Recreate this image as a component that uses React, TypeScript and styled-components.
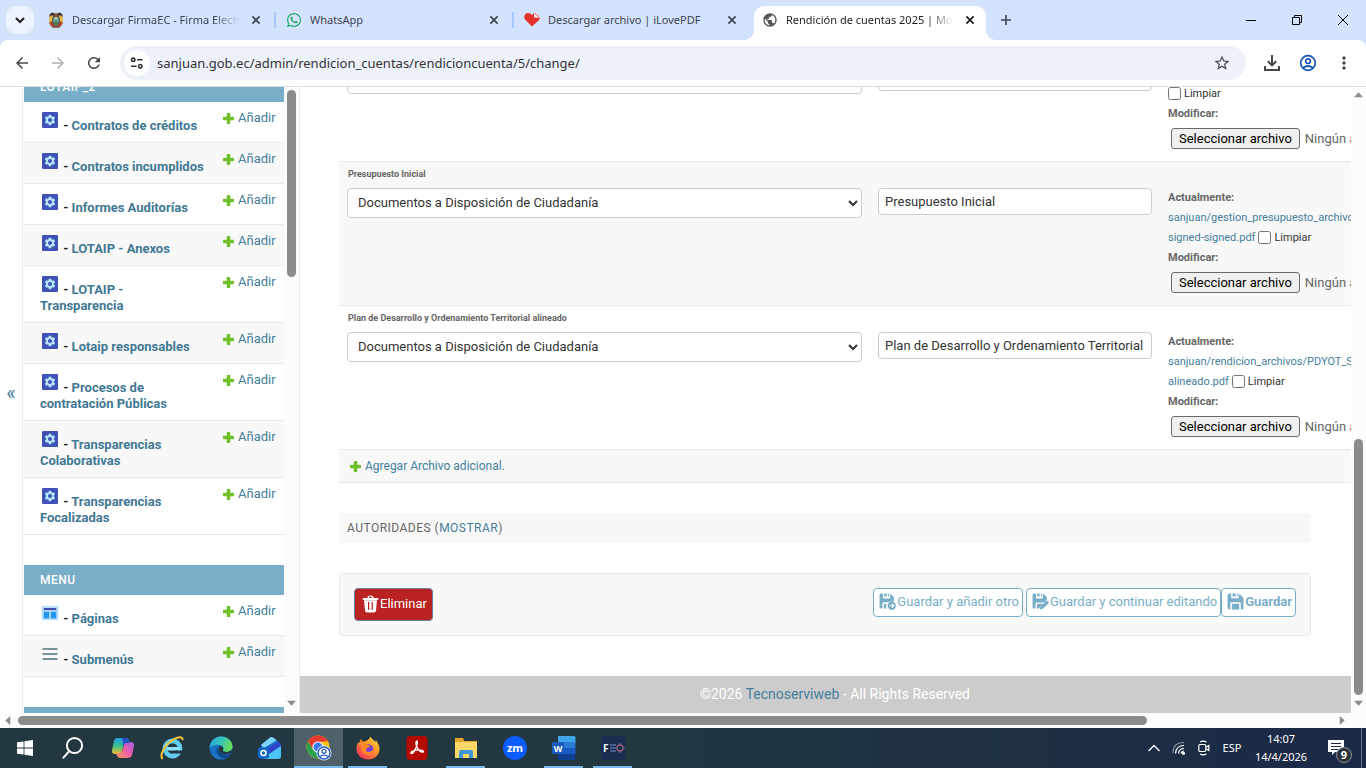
import React from "react";
import styled, { createGlobalStyle, css } from "styled-components";
import { FcTemplate, FcMenu } from "react-icons/fc";
import { FaWhatsapp } from "react-icons/fa";
import { MdArrowBack, MdArrowForward, MdRefresh, MdStarBorder, MdMoreVert, MdPublic } from "react-icons/md";

const uiFont = `"Noto Sans", "Open Sans", sans-serif`;
const pageFont = `Roboto, "Liberation Sans", sans-serif`;

const color = {
  strip: "#d3e3fd",
  omnibox: "#edf1fa",
  link: "#447e9b",
  heading: "#417893",
  accent: "#79aec8",
  hairline: "#e8e8e8",
  darkened: "#f8f8f8",
  border: "#cccccc",
  quiet: "#666666",
  text: "#333333",
  thumb: "#8b8b8b",
  track: "#fcfcfc",
  task: "#76b9ed",
};

const GlobalStyle = createGlobalStyle`
  *, *::before, *::after { box-sizing: border-box; }
  body { margin: 0; overflow: hidden; }
  button { font: inherit; color: inherit; margin: 0; padding: 0; border: 0; background: none; }
  a { color: ${color.link}; text-decoration: none; }
  ul { list-style: none; margin: 0; padding: 0; }
  svg { flex: none; }
`;

const Screen = styled.div`
  display: flex;
  flex-direction: column;
  height: 100vh;
  background: #fff;
  font-family: ${pageFont};
`;

/* ---------- tab strip ---------- */

const TabStrip = styled.header`
  display: flex;
  flex: none;
  height: 40px;
  background: ${color.strip};
  font: 11px/16px ${uiFont};
  color: #3c4350;
`;

const TabSearch = styled.button`
  display: grid;
  place-items: center;
  flex: none;
  width: 28px;
  height: 28px;
  margin: 6px 4px 6px 6px;
  border-radius: 10px;
  background: #ecf2fe;
`;

const Tabs = styled.ul`
  display: flex;
  min-width: 0;
`;

const Tab = styled.li<{ $active?: boolean; $divider?: boolean }>`
  position: relative;
  display: flex;
  align-items: center;
  gap: 8px;
  flex: 0 1 238px;
  min-width: 0;
  width: 238px;
  padding: 0 12px 0 10px;
  ${(p) =>
    p.$divider &&
    css`
      &::after {
        content: "";
        position: absolute;
        right: 0;
        top: 12px;
        width: 2px;
        height: 16px;
        background: #a8c7fa;
      }
    `}
  ${(p) =>
    p.$active &&
    css`
      flex-basis: 232px;
      margin: 6px 4px 0 2px;
      padding: 0 8px 6px;
      border-radius: 10px 10px 0 0;
      background: #fff;
      color: #1f1f1f;
      &::before,
      &::after {
        content: "";
        position: absolute;
        bottom: 0;
        width: 10px;
        height: 10px;
      }
      &::before {
        left: -10px;
        background: radial-gradient(circle at 0 0, transparent 10px, #fff 10px);
      }
      &::after {
        right: -10px;
        background: radial-gradient(circle at 100% 0, transparent 10px, #fff 10px);
      }
    `}
`;

const TabTitle = styled.button<{ $fade?: boolean }>`
  flex: 1;
  min-width: 0;
  overflow: hidden;
  white-space: nowrap;
  text-align: left;
  ${(p) => p.$fade && "mask-image: linear-gradient(90deg, #000 84%, transparent);"}
`;

const TabClose = styled.button`
  display: grid;
  place-items: center;
  flex: none;
  width: 16px;
  height: 16px;
`;

const NewTab = styled.button`
  display: grid;
  place-items: center;
  flex: none;
  width: 32px;
  height: 40px;
`;

const WindowButtons = styled.div`
  display: flex;
  margin-left: auto;
  color: #000;
`;

const WindowButton = styled.button`
  display: grid;
  place-items: center;
  width: 46px;
  height: 40px;
`;

/* ---------- address bar ---------- */

const ToolbarBack = styled.div`
  flex: none;
  background: ${color.strip};
`;

const Toolbar = styled.nav`
  display: flex;
  align-items: center;
  height: 47px;
  padding: 0 4px;
  border-bottom: 1px solid #dedede;
  border-radius: 8px 8px 0 0;
  background: #fff;
`;

const ToolButton = styled.button<{ $tone?: string }>`
  display: grid;
  place-items: center;
  flex: none;
  width: 36px;
  height: 34px;
  color: ${(p) => p.$tone ?? "#474747"};
`;

const Omnibox = styled.div`
  display: flex;
  align-items: center;
  flex: 1;
  min-width: 0;
  height: 34px;
  margin: 0 8px;
  padding: 0 6px 0 4px;
  border-radius: 17px;
  background: ${color.omnibox};
`;

const SiteInfo = styled.button`
  display: grid;
  place-items: center;
  flex: none;
  width: 26px;
  height: 26px;
  border-radius: 50%;
  background: #fff;
`;

const Address = styled.input`
  flex: 1;
  min-width: 0;
  margin-left: 7px;
  padding: 0;
  border: 0;
  background: none;
  color: #333;
  font: 13px/20px ${uiFont};
`;

/* ---------- page ---------- */

const Viewport = styled.div`
  display: flex;
  flex: 1;
  min-height: 0;
`;

const SidebarToggle = styled.button`
  flex: none;
  width: 23px;
  padding-bottom: 15px;
  border-right: 1px solid #eaeaea;
  color: ${color.heading};
  font-size: 20px;
  line-height: 24px;
`;

const Sidebar = styled.aside`
  display: flex;
  flex: none;
  width: 277px;
  overflow: hidden;
  padding-left: 1px;
  border-right: 1px solid #eaeaea;
`;

const SidebarScroll = styled.div`
  display: flex;
  flex-direction: column;
  flex: 1;
  gap: 30px;
  margin-top: -15px;
`;

const ModelTable = styled.table`
  flex: none;
  width: 100%;
  border-collapse: collapse;
  table-layout: fixed;
  font-size: 13px;
  line-height: 16px;
`;

const ModelCaption = styled.caption`
  padding: 7px 16px;
  background: ${color.accent};
  color: #fff;
  font-size: 12px;
  font-weight: 500;
  letter-spacing: 0.04em;
  text-align: left;
`;

const ModelRow = styled.tr`
  border-bottom: 1px solid ${color.hairline};
  &:nth-child(even) {
    background: ${color.darkened};
  }
`;

const ModelName = styled.th`
  padding: 8px 8px 8px 16px;
  color: #222;
  font-weight: 700;
  text-align: left;
  svg {
    vertical-align: baseline;
  }
  a {
    color: ${color.heading};
  }
`;

const ModelAdd = styled.td`
  width: 69px;
  padding: 8px;
  vertical-align: top;
`;

const AddLink = styled.a`
  display: flex;
  align-items: center;
  gap: 4px;
`;

const Track = styled.div<{ $horizontal?: boolean }>`
  display: flex;
  flex: none;
  align-items: center;
  background: ${color.track};
  ${(p) =>
    p.$horizontal
      ? css`
          height: 15px;
          padding-right: 16px;
        `
      : css`
          flex-direction: column;
          width: 15px;
          padding-bottom: 2px;
        `}
`;

const Arrow = styled.span<{ $dir: "up" | "down" | "left" | "right" }>`
  display: grid;
  place-items: center;
  flex: none;
  width: 16px;
  height: 16px;
  &::before {
    content: "";
    width: 9px;
    height: 9px;
    background: ${color.thumb};
    clip-path: ${(p) =>
      ({
        up: "polygon(0 75%, 50% 20%, 100% 75%)",
        down: "polygon(0 25%, 50% 80%, 100% 25%)",
        left: "polygon(75% 0, 20% 50%, 75% 100%)",
        right: "polygon(25% 0, 80% 50%, 25% 100%)",
      })[p.$dir]};
  }
`;

const Thumb = styled.span<{ $share: number; $horizontal?: boolean }>`
  flex: none;
  border-radius: 5px;
  background: ${color.thumb};
  ${(p) =>
    p.$horizontal
      ? `width: ${p.$share}%; height: 9px; margin-left: 2px;`
      : `height: ${p.$share}%; width: 9px;`}
`;

const Spring = styled.span`
  flex: 1;
`;

const SidebarThumb = styled(Thumb)`
  margin-top: 3px;
`;

const Main = styled.main`
  display: flex;
  flex-direction: column;
  justify-content: flex-end;
  flex: 1;
  min-width: 0;
  overflow: hidden;
`;

const Form = styled.form`
  display: flex;
  flex-direction: column;
  flex: none;
  gap: 30px;
  padding: 0 40px 40px 39px;
`;

const FileTable = styled.table`
  width: 1400px;
  border-collapse: collapse;
  table-layout: fixed;
`;

const FileRow = styled.tr`
  border-bottom: 1px solid ${color.hairline};
  &:nth-child(even) {
    background: ${color.darkened};
  }
`;

const TypeCell = styled.td`
  width: 531px;
  padding: 4px 8px;
  vertical-align: top;
`;

const RowTitle = styled.label`
  display: block;
  margin-bottom: 6px;
  padding-left: 1px;
  color: ${color.quiet};
  font-size: 9px;
  font-weight: 700;
  line-height: 16px;
`;

const NameCell = styled.td`
  width: 290px;
  padding: 26px 8px 8px;
  vertical-align: top;
`;

const fieldBox = css`
  display: block;
  width: 100%;
  border: 1px solid ${color.border};
  border-radius: 4px;
  background: #fff;
  color: ${color.text};
  font: 13px/16px ${pageFont};
`;

const TypeSelect = styled.select`
  ${fieldBox}
  height: 30px;
  padding: 4px 0 6px 6px;
`;

const NameInput = styled.input`
  ${fieldBox}
  height: 27px;
  padding: 5px 6px;
`;

const FileCell = styled.td`
  padding: 26px 8px 12px;
  color: ${color.quiet};
  font-size: 11px;
  line-height: 20px;
  vertical-align: top;
  white-space: nowrap;
`;

const FileLine = styled.div`
  display: flex;
  align-items: center;
  gap: 3px;
  height: 20px;
`;

const ClearBox = styled.input`
  width: 13px;
  height: 13px;
  margin: 0 0 2px;
`;

const ClearLabel = styled.label`
  color: ${color.text};
`;

const Picker = styled.div`
  display: flex;
  align-items: center;
  gap: 5px;
  padding: 4px 0 0 3px;
  font-size: 13px;
  line-height: 15px;
`;

const PickerButton = styled.button`
  height: 21px;
  padding: 0 7px;
  border: 1px solid #6b6b6b;
  border-radius: 3px;
  background: #efefef;
  color: #000;
`;

const AddRowCell = styled.td`
  padding: 8px 11px;
  background: ${color.darkened};
  font-size: 12px;
  line-height: 16px;
`;

const Fieldset = styled.h2`
  margin: 0;
  padding: 7px 8px;
  background: ${color.darkened};
  color: ${color.quiet};
  font-size: 12px;
  font-weight: 400;
  line-height: 16px;
  letter-spacing: 0.04em;
`;

const SubmitRow = styled.div`
  display: flex;
  align-items: flex-start;
  padding: 14px;
  border: 1px solid ${color.hairline};
  border-radius: 4px;
  background: ${color.darkened};
  font-size: 13px;
  line-height: 16px;
`;

const DeleteButton = styled.button`
  display: flex;
  align-items: center;
  height: 33px;
  margin-right: auto;
  padding: 0 5px 2px 7px;
  gap: 1px;
  border: 1px solid #6a7fa8;
  border-radius: 4px;
  background: #ba2121;
  color: #fff;
`;

const SaveButton = styled.button<{ $primary?: boolean; $spaced?: boolean }>`
  display: flex;
  align-items: center;
  height: 29px;
  padding: 0 3px 2px 5px;
  gap: 1px;
  margin-right: ${(p) => (p.$spaced ? 3 : 0)}px;
  border: 1px solid ${color.accent};
  border-radius: 4px;
  background: #fff;
  color: ${color.accent};
  font-weight: ${(p) => (p.$primary ? 700 : 400)};
`;

const Footer = styled.footer`
  flex: none;
  padding: 8px 0 9px 19px;
  background: #ccc;
  color: #fff;
  font-size: 14px;
  line-height: 20px;
  text-align: center;
`;

/* ---------- taskbar ---------- */

const Taskbar = styled.footer`
  display: flex;
  flex: none;
  height: 40px;
  background: linear-gradient(90deg, #22373f 0%, #22373f 45%, #1b2a46 95%);
  color: #fff;
  font: 11px/18px ${uiFont};
`;

const TaskButton = styled.button<{ $running?: boolean; $active?: boolean }>`
  position: relative;
  display: grid;
  place-items: center;
  flex: none;
  width: 49px;
  height: 40px;
  background: ${(p) => (p.$active ? "#4f6168" : "none")};
  ${(p) =>
    (p.$running || p.$active) &&
    css`
      &::after {
        content: "";
        position: absolute;
        right: ${p.$active ? 0 : 5}px;
        bottom: 0;
        left: ${p.$active ? 0 : 5}px;
        height: 2px;
        background: ${color.task};
      }
    `}
`;

const Tray = styled.div`
  display: flex;
  align-items: center;
  margin-left: auto;
`;

const TrayButton = styled.button`
  display: grid;
  place-items: center;
  width: 25px;
  height: 40px;
`;

const Language = styled.button`
  width: 32px;
  height: 40px;
`;

const Clock = styled.button`
  width: 66px;
  height: 40px;
  text-align: center;
`;

const Notifications = styled.button`
  display: grid;
  place-items: center;
  width: 47px;
  height: 40px;
  padding: 4px 0 0 4px;
`;

const ShowDesktop = styled.button`
  width: 5px;
  height: 40px;
  border-left: 1px solid #66728a;
`;

/* ---------- drawings ---------- */

const Cross = () => (
  <svg width="10" height="10" viewBox="0 0 10 10" stroke="currentColor" strokeWidth="1.7">
    <path d="M1.4 1.4l7.2 7.2M8.6 1.4L1.4 8.6" />
  </svg>
);

const Shield = () => (
  <svg width="16" height="16" viewBox="0 0 16 16">
    <path d="M1 3q2-3 5-1l2-1 2 1q3-2 5 1l-1 4 1 4-2 3-2 2H5l-2-2-2-3 1-4z" fill="#8d5a48" />
    <path d="M1.5 4.5L5 4v5l-4 2zM14.5 4.5L11 4v5l4 2z" fill="#e0b73e" />
    <path d="M2 10l3 1v4l-2-1zM14 10l-3 1v4l2-1z" fill="#c43d30" />
    <path d="M2.500 2.500l2.500-1 1.500 1.500M13.500 2.500l-2.500-1L9.500 3" stroke="#2b2b2b" strokeWidth="1.600" fill="none" />
    <ellipse cx="8" cy="8.600" rx="3.400" ry="4.600" fill="#5fa3c0" stroke="#54423f" />
    <path d="M5.400 10q2.600-2 5.200 0-.6 2.800-2.600 3-2-.2-2.600-3z" fill="#4e8752" />
    <circle cx="8" cy="6.200" r="1.200" fill="#f1cf4a" />
  </svg>
);

const Heart = () => (
  <svg width="16" height="16" viewBox="0 0 16 16">
    <path d="M8 14.500L1.200 7.800C-.8 5.500.3 1.500 3.600 1c2-.3 3.600.8 4.400 2.200L9.600 1.300h1.800L15.800 5.500c0 1.200-.5 2.200-1.200 3z" fill="#e5322d" />
    <path d="M10 1.300l.2 4.200 5.400.2z" fill="#fff" />
    <path d="M11.600 1.300v3h3.900z" fill="#f3a4a0" />
  </svg>
);

const Plus = () => (
  <svg width="11" height="11" viewBox="0 0 11 11" fill="#70bf2b">
    <path d="M4.400 0h2.200q.7 0 .7.700v3h3q.7 0 .7.700v2.200q0 .7-.7.700h-3v3q0 .7-.7.700H4.400q-.7 0-.7-.7v-3h-3Q0 7.300 0 6.600V4.400q0-.7.700-.7h3v-3q0-.7.700-.7z" />
  </svg>
);

const GearTile = ({ size }: { size: number }) => (
  <svg width={size} height={size} viewBox="0 0 20 20">
    <rect x="2" y="2" width="16" height="16" rx="1.200" fill="#3f51b5" />
    <path
      transform="translate(3.400 3.400) scale(.55)"
      fill="#b3e5fc"
      d="M19.140 12.940c.04-.3.060-.610.060-.940 0-.320-.020-.640-.070-.940l2.030-1.580c.180-.140.230-.410.120-.610l-1.920-3.320c-.120-.220-.370-.290-.590-.220l-2.390.960c-.5-.380-1.030-.7-1.620-.940l-.360-2.540c-.04-.240-.240-.410-.480-.410h-3.840c-.240 0-.430.170-.470.410l-.360 2.540c-.590.240-1.130.570-1.620.940l-2.390-.960c-.220-.080-.470 0-.590.220L2.740 8.870c-.120.210-.080.470.120.610l2.030 1.580c-.050.3-.090.630-.090.940s.020.640.070.940l-2.030 1.580c-.180.140-.230.410-.120.610l1.920 3.320c.120.220.370.290.590.220l2.390-.960c.5.380 1.030.7 1.620.940l.360 2.540c.050.240.240.410.480.410h3.840c.240 0 .440-.170.470-.410l.360-2.540c.590-.240 1.130-.560 1.620-.940l2.390.960c.220.080.470 0 .590-.220l1.920-3.320c.120-.220.070-.470-.120-.610l-2.010-1.580zM12 15.600c-1.980 0-3.600-1.620-3.600-3.600s1.620-3.600 3.600-3.600 3.600 1.620 3.600 3.600-1.620 3.600-3.600 3.600z"
    />
  </svg>
);

const Trash = () => (
  <svg width="17" height="18" viewBox="0 0 17 18" fill="#fff">
    <path d="M5.600 3V2.200Q5.600.4 8.500.4t2.900 1.800V3h4.800v2H.8V3zM7.100 3h2.800v-.6Q9.900 1.600 8.500 1.600t-1.400.8z" fillRule="evenodd" />
    <path d="M2 5.300h13l-1 10.200q-.2 2-2 2H5q-1.800 0-2-2zM6 7v8h1.200V7zm3.600 0v8h1.200V7z" fillRule="evenodd" />
  </svg>
);

const Save = () => (
  <svg width="17" height="17" viewBox="0 0 16 16" fill={color.accent}>
    <path d="M2.500.5H4v3.700q0 .8.800.8h5.400q.8 0 .8-.8V.6l1.200.5L15 4.200q.5.500.5 1.200v8.600q0 1.500-1.500 1.500h-1V10q0-1.200-1.200-1.200H4.200Q3 8.800 3 10v5.500h-.5q-2 0-2-2v-11q0-2 2-2z" />
    <path d="M5.200.5h3v2.800h-3zM9.300.5H10v2.800h-.7zM4.500 10.200h7v5.300h-7z" />
  </svg>
);

const SaveNext = () => (
  <svg width="17" height="17" viewBox="0 0 16 16">
    <path d="M2 .5h1.700v4q0 .6.600.6h5.400q.6 0 .6-.6v-4l3.700 3.300v4.500q-3-1-5.200.5H4.300q-1 0-1 1v4.700H2q-1.500 0-1.500-1.500V2Q.5.500 2 .500z" fill={color.accent} />
    <path d="M5 .5h2.300v2.700H5zM8.400.5h.9v2.700h-.9zM4.600 10h2.500q-.8 2-.2 4.500H4.600z" fill={color.accent} />
    <circle cx="12" cy="12" r="3.900" fill={color.accent} />
    <path d="M9.800 12h4M12.200 10.200L14 12l-1.800 1.800" fill="none" stroke="#fff" strokeWidth="1.100" />
  </svg>
);

const SaveEdit = () => (
  <svg width="17" height="17" viewBox="0 0 16 16">
    <path d="M2 .5h1.700v4q0 .6.600.6h5.400q.6 0 .6-.6v-4L14 3.800v2.800L11.600 9H4.300q-1 0-1 1v4.500H2q-1.500 0-1.500-1.500V2Q.5.500 2 .500z" fill={color.accent} />
    <path d="M5 .5h2.300v2.700H5zM8.400.5h.9v2.700h-.9zM4.600 10.200h6L6.800 14v.5H4.600z" fill={color.accent} />
    <path d="M7.400 15.600l.6-3 5.200-5q1-.8 2 .2t.2 2l-5.200 5z" fill={color.accent} />
  </svg>
);

const WindowsLogo = () => (
  <svg width="16" height="16" viewBox="0 0 16 16" fill="#fff">
    <path d="M0 2.300L6.600 1.400v6.200H0zM7.400 1.300L16 .1v7.500H7.400zM0 8.400h6.600v6.200L0 13.700zM7.400 8.400H16v7.500l-8.600-1.200z" />
  </svg>
);

const Loupe = () => (
  <svg width="24" height="24" viewBox="0 0 24 24" fill="none" stroke="#fff" strokeWidth="2">
    <circle cx="12.500" cy="9.500" r="7.600" />
    <path d="M7.200 15.200L.8 22.400" />
  </svg>
);

const Copilot = () => (
  <svg width="24" height="22" viewBox="0 0 24 22">
    <defs>
      <linearGradient id="cpA" x1="0" y1="0" x2="0" y2="1">
        <stop offset="0" stopColor="#1b9fe8" />
        <stop offset=".5" stopColor="#3ac08a" />
        <stop offset="1" stopColor="#f5c02c" />
      </linearGradient>
      <linearGradient id="cpB" x1="1" y1="0" x2="0" y2="1">
        <stop offset="0" stopColor="#a05ce8" />
        <stop offset=".5" stopColor="#ea5fa5" />
        <stop offset="1" stopColor="#ff9b52" />
      </linearGradient>
    </defs>
    <path d="M6 1h9q2 0 2.800 2l1 3h-3.400q-2 0-2.600 2l-2.200 7q-.6 2-2.600 2H4q-3.600 0-3-4l2-9Q3.600 1 6 1z" fill="url(#cpA)" />
    <path d="M18 21H9q-2 0-2.800-2l-1-3h3.400q2 0 2.600-2l2.200-7q.6-2 2.600-2h4q3.600 0 3 4l-2 9q-.6 3-5 3z" fill="url(#cpB)" />
    <path d="M11 1h4q2 0 2.800 2l1 3h-3.400q-2 0-2.600 2l-.6 2q-.2-5-1.200-9z" fill="#2452c9" />
  </svg>
);

const Explorer = () => (
  <svg width="24" height="24" viewBox="0 0 24 24">
    <circle cx="12.500" cy="12.500" r="7.600" fill="none" stroke="#62cdf4" strokeWidth="4.600" />
    <path d="M7 11h13v3.500H7z" fill="#8fe0fa" />
    <path d="M15 14.500h9v3h-9z" fill="#22373f" />
    <path d="M2.600 23C-1 19 5 8 14 3.200 19 .4 23 .6 22.600 4.200" fill="none" stroke="#f5c738" strokeWidth="2" />
  </svg>
);

const Edge = () => (
  <svg width="24" height="24" viewBox="0 0 24 24">
    <defs>
      <linearGradient id="edA" x1="0" y1="0" x2="1" y2="0.300">
        <stop offset="0" stopColor="#2aa5e0" />
        <stop offset=".6" stopColor="#35c6b6" />
        <stop offset="1" stopColor="#66dc5a" />
      </linearGradient>
    </defs>
    <circle cx="12" cy="12" r="11.500" fill="#1a73c4" />
    <path d="M.6 11.500C1.200 5 6 .5 12 .5c6.500 0 11.500 4.500 11.500 10 0 3.600-3 5.500-6 5.500-2.500 0-4-.8-3.400-2 1-2-.6-5.200-4.600-5.200-4 0-7.500 1-8.900 2.700z" fill="url(#edA)" />
    <path d="M8.500 10.500c-3 4.500 0 11.500 7.500 11.700 2.600-.8 4.800-2.500 6-4.500-6 2.300-12.500-.5-13.500-7.200z" fill="#114a8b" />
    <path d="M14 14c1-2-.4-4-2.400-4-2.200 0-2.600 3.200-1 5.400 2 2.800 8 3.800 12 1.200l.6-2.600-5 2c-3 0-4.800-.8-4.200-2z" fill="#22373f" />
  </svg>
);

const Outlook = () => (
  <svg width="24" height="24" viewBox="0 0 24 24">
    <path d="M3 9L12 1.500q1.500-1 3 0L23 8v12q0 3-3 3H6q-3 0-3-3z" fill="#1b6fd6" />
    <path d="M3 9L12 1.500q1.500-1 3 0l3.500 2.800L6 12z" fill="#7cd6fb" />
    <path d="M8 12.500L20.500 5.800 23 8v3L12 18z" fill="#2f45c9" />
    <path d="M23 10v10q0 3-3 3H6l5-5z" fill="#4cc2f7" />
    <rect x="0" y="11.500" width="11" height="11" rx="2" fill="#1067c4" />
    <circle cx="5.500" cy="17" r="2.500" fill="none" stroke="#fff" strokeWidth="1.500" />
  </svg>
);

const ChromeLogo = () => (
  <svg width="26" height="26" viewBox="0 0 26 26">
    <circle cx="12" cy="12" r="11.500" fill="#fbc116" />
    <path d="M2 6.300A11.500 11.500 0 0 1 22 6.300L12 7 7 14.500z" fill="#e33b2e" />
    <path d="M2 6.300a11.500 11.500 0 0 0 10 17.200l4-7-9-2z" fill="#2ca14c" />
    <circle cx="12" cy="12" r="5.600" fill="#fff" />
    <circle cx="12" cy="12" r="4.500" fill="#3f7de8" />
    <circle cx="18" cy="18" r="7.500" fill="#e8f0fe" />
    <circle cx="18" cy="18" r="6" fill="#fff" stroke="#2a5cc0" strokeWidth="1.500" />
    <circle cx="18" cy="16.300" r="2" fill="none" stroke="#2a5cc0" strokeWidth="1.300" />
    <path d="M13.800 21.600q4.200-3 8.400 0" fill="none" stroke="#2a5cc0" strokeWidth="1.300" />
  </svg>
);

const Firefox = () => (
  <svg width="24" height="24" viewBox="0 0 24 24">
    <defs>
      <linearGradient id="ffA" x1="1" y1="0" x2=".2" y2="1">
        <stop offset="0" stopColor="#ffe14d" />
        <stop offset=".45" stopColor="#ff9a22" />
        <stop offset="1" stopColor="#f03060" />
      </linearGradient>
    </defs>
    <path d="M14.500.5c1 2.500 3.500 3.500 4.800 5.500l.5-2c2 2.600 3.700 5.600 3.700 9 0 6-5 10.500-11.500 10.500S.5 18.800.5 13c0-3.500 1-5.800 2.500-7.500l.4 2 1.400-4.500L7 5.800c3-.4 6-1.800 7.500-5.300z" fill="url(#ffA)" />
    <circle cx="12.200" cy="13.500" r="5.300" fill="#7a3fd6" />
    <path d="M5.500 9.500c2-1.600 5-1.500 6.500-.2l2.500.7c-1 1.500-3.500 1.500-4.500 3-.6 1.500.5 3 2.500 3 2.500 0 4-1.500 5.200-3.500 0 4.500-2.700 6.500-5.700 6.500-4 0-7.500-3.500-6.500-9.500z" fill="#ff8a1f" />
  </svg>
);

const Acrobat = () => (
  <svg width="22" height="24" viewBox="0 0 22 24">
    <rect x=".5" y="0" width="21" height="24" rx="4" fill="#b30b00" />
    <path d="M10.800 5c-1.500.2-.8 4 .2 6.300 1.200 2.700 4 5.300 6 4.800 1.600-.6-.5-2.300-4.500-2.200-3.500.1-8 1.500-7.600 3.200.5 1.600 3-.6 4.500-4 1.200-2.800 2.900-8 1.400-8.100z" fill="none" stroke="#fff" strokeWidth="1.400" />
  </svg>
);

const Folder = () => (
  <svg width="24" height="24" viewBox="0 0 24 24">
    <path d="M1 2h8l1.500 3H23v17H1z" fill="#e0a52c" />
    <path d="M1 6h22v16H1z" fill="#fbd768" />
    <path d="M5 22v-6q0-2 2-2h10q2 0 2 2v6h-4v-4H9v4z" fill="#3f97d4" />
  </svg>
);

const AppLetters = styled.text`
  font-family: ${uiFont};
  font-weight: 700;
  fill: #fff;
`;

const Zoom = () => (
  <svg width="24" height="24" viewBox="0 0 24 24">
    <circle cx="12" cy="12" r="12" fill="#0b5cff" />
    <AppLetters x="12" y="16" fontSize="11" textAnchor="middle">zm</AppLetters>
  </svg>
);

const Word = () => (
  <svg width="24" height="24" viewBox="0 0 24 24">
    <path d="M6 0h16q1.500 0 1.500 1.500V7H6z" fill="#41a5ee" />
    <path d="M6 6h17.500v6H6z" fill="#2b7cd3" />
    <path d="M6 12h17.500v6H6z" fill="#185abd" />
    <path d="M6 18h17.500v4.500Q23.500 24 22 24H6z" fill="#103f91" />
    <rect x="0" y="6" width="12" height="12" rx="1" fill="#185abd" />
    <AppLetters x="6" y="15.500" fontSize="9" textAnchor="middle">W</AppLetters>
  </svg>
);

const FirmaEC = () => (
  <svg width="24" height="24" viewBox="0 0 24 24">
    <rect width="24" height="24" rx="2" fill="#1b2c4e" />
    <AppLetters x="2" y="16" fontSize="10">F</AppLetters>
    <path d="M9 9h6M9 12h6M9 15h6" stroke="#5b6da8" strokeWidth="1.500" />
    <circle cx="19" cy="12" r="3" fill="none" stroke="#a0606e" strokeWidth="1.300" />
    <path d="M19 7v2M19 15v2M15 12h2M21.500 12H24" stroke="#5b6da8" />
  </svg>
);

const Person = () => (
  <svg width="18" height="18" viewBox="0 0 18 18" fill="none" stroke="#1a56b8" strokeWidth="1.700">
    <circle cx="9" cy="9" r="7.300" />
    <circle cx="9" cy="7.200" r="2.300" />
    <path d="M4 14q5-4 10 0" />
  </svg>
);

/* ---------- data ---------- */

const tabs = [
  { title: "Descargar FirmaEC - Firma Electrónica", icon: <Shield />, divider: true, fade: true },
  { title: "WhatsApp", icon: <FaWhatsapp size={16} color="#25a860" />, divider: true },
  { title: "Descargar archivo | iLovePDF", icon: <Heart /> },
  { title: "Rendición de cuentas 2025 | Modificar", icon: <MdPublic size={16} color="#54575a" />, active: true, fade: true },
];

const groups = [
  {
    title: "LOTAIP_2",
    models: [
      "Contratos de créditos",
      "Contratos incumplidos",
      "Informes Auditorías",
      "LOTAIP - Anexos",
      "LOTAIP - Transparencia",
      "Lotaip responsables",
      "Procesos de contratación Públicas",
      "Transparencias Colaborativas",
      "Transparencias Focalizadas",
    ].map((name) => ({ name, Icon: GearTile })),
  },
  {
    title: "MENU",
    models: [
      { name: "Páginas", Icon: FcTemplate },
      { name: "Submenús", Icon: FcMenu },
    ],
  },
  { title: "NOTICIAS", models: [] },
];

const files = [
  { title: "Presupuesto", name: "Presupuesto", link: [] as string[] },
  {
    title: "Presupuesto Inicial",
    name: "Presupuesto Inicial",
    link: ["sanjuan/gestion_presupuesto_archivos/presupuesto-", "signed-signed.pdf"],
  },
  {
    title: "Plan de Desarrollo y Ordenamiento Territorial alineado",
    name: "Plan de Desarrollo y Ordenamiento Territorial alineado",
    link: ["sanjuan/rendicion_archivos/PDYOT_SAN_JUAN-", "alineado.pdf"],
  },
];

const taskItems = [
  { label: "Inicio", icon: <WindowsLogo /> },
  { label: "Buscar", icon: <Loupe /> },
  { label: "Copilot", icon: <Copilot /> },
  { label: "Internet Explorer", icon: <Explorer /> },
  { label: "Edge", icon: <Edge /> },
  { label: "Outlook", icon: <Outlook /> },
  { label: "Chrome", icon: <ChromeLogo />, active: true },
  { label: "Firefox", icon: <Firefox />, running: true },
  { label: "Acrobat", icon: <Acrobat /> },
  { label: "Explorador", icon: <Folder />, running: true },
  { label: "Zoom", icon: <Zoom /> },
  { label: "Word", icon: <Word />, running: true },
  { label: "FirmaEC", icon: <FirmaEC />, running: true },
];

/* ---------- sections ---------- */

function BrowserChrome() {
  return (
    <>
      <TabStrip>
        <TabSearch aria-label="Buscar pestañas">
          <svg width="10" height="7" viewBox="0 0 10 7" fill="none" stroke="#1f1f1f" strokeWidth="2">
            <path d="M1 1l4 4 4-4" />
          </svg>
        </TabSearch>
        <Tabs>
          {tabs.map((t) => (
            <Tab key={t.title} $active={t.active} $divider={t.divider}>
              {t.icon}
              <TabTitle $fade={t.fade}>{t.title}</TabTitle>
              <TabClose aria-label="Cerrar pestaña">
                <Cross />
              </TabClose>
            </Tab>
          ))}
        </Tabs>
        <NewTab aria-label="Nueva pestaña">
          <svg width="12" height="12" viewBox="0 0 12 12" stroke="currentColor" strokeWidth="1.600">
            <path d="M6 1v10M1 6h10" />
          </svg>
        </NewTab>
        <WindowButtons>
          <WindowButton aria-label="Minimizar">
            <svg width="10" height="10" viewBox="0 0 10 10" stroke="currentColor">
              <path d="M0 5.500h10" />
            </svg>
          </WindowButton>
          <WindowButton aria-label="Restaurar">
            <svg width="10" height="10" viewBox="0 0 10 10" fill="none" stroke="currentColor">
              <path d="M.5 2.500h7v7h-7zM2.500 2.500v-2h7v7h-2" />
            </svg>
          </WindowButton>
          <WindowButton aria-label="Cerrar">
            <svg width="10" height="10" viewBox="0 0 10 10" stroke="currentColor">
              <path d="M0 0l10 10M10 0L0 10" />
            </svg>
          </WindowButton>
        </WindowButtons>
      </TabStrip>
      <ToolbarBack>
        <Toolbar>
          <ToolButton aria-label="Atrás"><MdArrowBack size={18} /></ToolButton>
          <ToolButton aria-label="Adelante" $tone="#b0b0b0"><MdArrowForward size={18} /></ToolButton>
          <ToolButton aria-label="Recargar"><MdRefresh size={18} /></ToolButton>
          <Omnibox>
            <SiteInfo aria-label="Información del sitio">
              <svg width="14" height="12" viewBox="0 0 14 12" fill="none" stroke="#333" strokeWidth="1.600">
                <circle cx="3.200" cy="2.800" r="1.700" />
                <path d="M7 2.800h5.500M1 9.200h5.500" />
                <circle cx="10.300" cy="9.200" r="1.700" />
              </svg>
            </SiteInfo>
            <Address aria-label="Dirección" defaultValue="sanjuan.gob.ec/admin/rendicion_cuentas/rendicioncuenta/5/change/" />
            <ToolButton aria-label="Favorito"><MdStarBorder size={18} /></ToolButton>
          </Omnibox>
          <ToolButton aria-label="Descargas">
            <svg width="16" height="16" viewBox="0 0 16 16" fill="none" stroke="currentColor" strokeWidth="2">
              <path d="M8 0v10M3.800 6.200L8 10.400l4.200-4.200M1 11v4h14v-4" />
            </svg>
          </ToolButton>
          <ToolButton aria-label="Perfil"><Person /></ToolButton>
          <ToolButton aria-label="Menú"><MdMoreVert size={20} /></ToolButton>
        </Toolbar>
      </ToolbarBack>
    </>
  );
}

function ModelSidebar() {
  return (
    <Sidebar>
      <SidebarScroll>
        {groups.map((g) => (
          <ModelTable key={g.title}>
            <ModelCaption>{g.title}</ModelCaption>
            <tbody>
              {g.models.map(({ name, Icon }) => (
                <ModelRow key={name}>
                  <ModelName scope="row">
                    <Icon size={20} /> - <a href="#model">{name}</a>
                  </ModelName>
                  <ModelAdd>
                    <AddLink href="#add"><Plus />Añadir</AddLink>
                  </ModelAdd>
                </ModelRow>
              ))}
            </tbody>
          </ModelTable>
        ))}
      </SidebarScroll>
      <Track>
        <SidebarThumb $share={30} />
        <Spring />
        <Arrow $dir="down" />
      </Track>
    </Sidebar>
  );
}

function FileFields({ index }: { index: number }) {
  const file = files[index];
  return (
    <FileRow>
      <TypeCell>
        <RowTitle htmlFor={`type-${index}`}>{file.title}</RowTitle>
        <TypeSelect id={`type-${index}`}>
          <option>Documentos a Disposición de Ciudadanía</option>
        </TypeSelect>
      </TypeCell>
      <NameCell>
        <NameInput aria-label="Nombre" defaultValue={file.name} />
      </NameCell>
      <FileCell>
        <FileLine><strong>Actualmente:</strong></FileLine>
        {file.link.length > 0 && <FileLine><a href="#file">{file.link[0]}</a></FileLine>}
        <FileLine>
          {file.link.length > 0 && <a href="#file">{file.link[1]}</a>}
          <ClearBox type="checkbox" id={`clear-${index}`} />
          <ClearLabel htmlFor={`clear-${index}`}>Limpiar</ClearLabel>
        </FileLine>
        <FileLine><strong>Modificar:</strong></FileLine>
        <Picker>
          <PickerButton type="button">Seleccionar archivo</PickerButton>
          <span>Ningún archivo seleccionado</span>
        </Picker>
      </FileCell>
    </FileRow>
  );
}

export default function App() {
  return (
    <Screen>
      <GlobalStyle />
      <BrowserChrome />
      <Viewport>
        <SidebarToggle aria-label="Alternar navegación">«</SidebarToggle>
        <ModelSidebar />
        <Main>
          <Form>
            <FileTable>
              <tbody>
                {files.map((f, i) => (
                  <FileFields key={f.title} index={i} />
                ))}
                <FileRow>
                  <AddRowCell colSpan={3}>
                    <AddLink href="#add-file"><Plus />Agregar Archivo adicional.</AddLink>
                  </AddRowCell>
                </FileRow>
              </tbody>
            </FileTable>
            <Fieldset>
              AUTORIDADES (<a href="#show">MOSTRAR</a>)
            </Fieldset>
            <SubmitRow>
              <DeleteButton type="button"><Trash />Eliminar</DeleteButton>
              <SaveButton type="button" $spaced><SaveNext />Guardar y añadir otro</SaveButton>
              <SaveButton type="button"><SaveEdit />Guardar y continuar editando</SaveButton>
              <SaveButton type="button" $primary><Save />Guardar</SaveButton>
            </SubmitRow>
          </Form>
          <Footer>
            ©2026 <a href="#tecnoserviweb">Tecnoserviweb</a> - All Rights Reserved
          </Footer>
        </Main>
        <Track>
          <Arrow $dir="up" />
          <Spring />
          <Thumb $share={41} />
          <Arrow $dir="down" />
        </Track>
      </Viewport>
      <Track $horizontal>
        <Arrow $dir="left" />
        <Thumb $horizontal $share={83.6} />
        <Spring />
        <Arrow $dir="right" />
      </Track>
      <Taskbar>
        {taskItems.map((t) => (
          <TaskButton key={t.label} aria-label={t.label} $running={t.running} $active={t.active}>
            {t.icon}
          </TaskButton>
        ))}
        <Tray>
          <TrayButton aria-label="Iconos ocultos">
            <svg width="12" height="8" viewBox="0 0 12 8" fill="none" stroke="#fff" strokeWidth="1.300">
              <path d="M.5 7L6 1.500 11.500 7" />
            </svg>
          </TrayButton>
          <TrayButton aria-label="Red">
            <svg width="14" height="14" viewBox="0 0 14 14" fill="none" stroke="#fff" strokeWidth="1.200">
              <path d="M1 12Q1 1.500 12 1.500" stroke="#8f9aa8" />
              <path d="M3.500 12.500Q4 4.500 12 4.500M6.500 12.500Q7 7.500 12 7.500M9 12.500Q9.500 10 12 10" />
              <circle cx="11.500" cy="12.300" r="1" fill="#fff" />
            </svg>
          </TrayButton>
          <TrayButton aria-label="Cámara">
            <svg width="12" height="16" viewBox="0 0 12 16" fill="none" stroke="#fff" strokeWidth="1.200">
              <rect x=".8" y="4.500" width="7" height="7" rx="1.200" />
              <path d="M8 7.200l2.800-1.700v5L8 8.800M2 2q3-1.700 6.500 0M2 14q3 1.700 6.500 0" />
            </svg>
          </TrayButton>
          <Language>ESP</Language>
          <Clock>
            14:07
            <br />
            14/4/2026
          </Clock>
          <Notifications aria-label="9 notificaciones">
            <svg width="26" height="26" viewBox="0 0 26 26">
              <path d="M1 3h16v12H8l-3 3v-3H1z" fill="#fff" />
              <path d="M4 6.500h10M4 9.500h10M4 12.500h7" stroke="#1b2a46" />
              <circle cx="17" cy="18" r="7.500" fill="#2b3138" stroke="#8d949e" />
              <AppLetters x="17" y="22" fontSize="11" textAnchor="middle">9</AppLetters>
            </svg>
          </Notifications>
          <ShowDesktop aria-label="Mostrar escritorio" />
        </Tray>
      </Taskbar>
    </Screen>
  );
}
